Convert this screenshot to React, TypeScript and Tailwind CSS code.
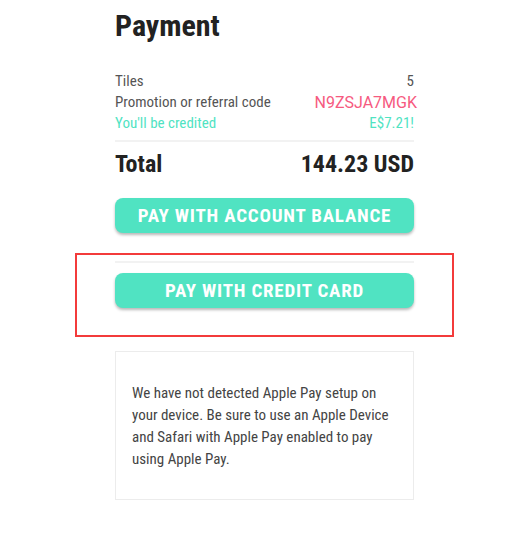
const font = "font-['Roboto_Condensed',Roboto,sans-serif]";

function PayButton({ label }: { label: string }) {
  return (
    <button
      type="button"
      className="flex h-[35px] w-full items-center justify-center rounded-[8px] bg-[#50e3c2] text-[19px] leading-[35px] font-bold tracking-[0.8px] text-white uppercase shadow-[0_2px_3px_rgba(0,0,0,0.28)]"
    >
      {label}
    </button>
  );
}

export default function App() {
  return (
    <div className={`min-h-[547px] bg-white ${font}`}>
      <div className="flex justify-center pl-[6px]">
        <div className="flex w-[379px] flex-col">
          <div className="px-[40px]">
            <h1 className="pt-[10px] text-[30px] leading-[32px] font-bold text-[#222]">Payment</h1>

            <div className="mt-[29px] text-[15px] leading-[21px] text-[#555]">
              <div className="flex justify-between">
                <span>Tiles</span>
                <span>5</span>
              </div>
              <div className="flex justify-between">
                <span>Promotion or referral code</span>
                <span className="-mr-[3px] font-['Roboto',sans-serif] text-[16px] text-[#f65a80]">N9ZSJA7MGK</span>
              </div>
              <div className="flex justify-between text-[#50e3c2]">
                <span>You'll be credited</span>
                <span>E$7.21!</span>
              </div>
            </div>

            <div className="mt-[6px] h-[2px] bg-[#f2f2f2]" />

            <div className="mt-[8px] flex justify-between text-[24px] leading-[28px] font-bold text-[#222]">
              <span>Total</span>
              <span>144.23 USD</span>
            </div>

            <div className="mt-[20px]">
              <PayButton label="Pay with account balance" />
            </div>
          </div>

          <div className="mt-[20px] border-2 border-[#f33b3b] px-[38px] pt-[6px] pb-[27px]">
            <div className="h-[2px] bg-[#f2f2f2]" />
            <div className="mt-[10px]">
              <PayButton label="Pay with credit card" />
            </div>
          </div>

          <div className="px-[40px]">
            <div className="mt-[14px] border border-[#ececec] px-[16px] pt-[30px] pb-[29px] text-[15px] leading-[22px] text-[#444]">
              We have not detected Apple Pay setup on your device. Be sure to use an Apple Device and
              Safari with Apple Pay enabled to pay using Apple Pay.
            </div>
          </div>
        </div>
      </div>
    </div>
  );
}
